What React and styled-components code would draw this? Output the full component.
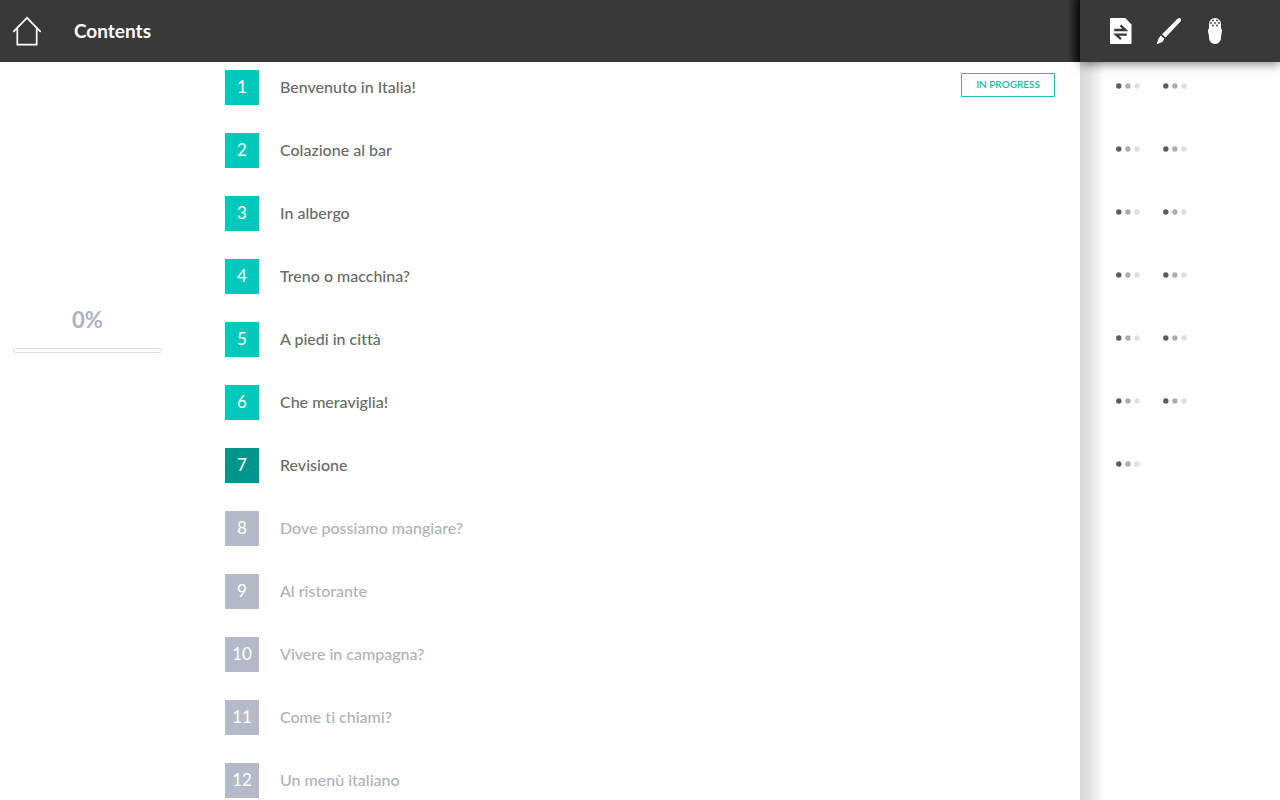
import styled, { createGlobalStyle } from "styled-components";

const GlobalStyle = createGlobalStyle`
  * {
    box-sizing: border-box;
  }

  body {
    margin: 0;
    background-color: #ffffff;
    font-family: Lato, "Open Sans", sans-serif;
    font-variant-ligatures: none;
  }

  button {
    padding: 0;
    border: none;
    background: none;
    font: inherit;
    cursor: pointer;
  }
`;

// --- Layout ---
const Page = styled.div`
  display: grid;
  grid-template-columns: 1fr 200px;
  grid-template-rows: 62px 1fr;
  height: 100vh;
  overflow: hidden;
`;

const Header = styled.header`
  display: flex;
  align-items: center;
  gap: 32px;
  padding: 0 12px;
  background-color: #393939;
  background-image: linear-gradient(to left, rgba(0, 0, 0, 0.7), transparent 12px);
`;

const Tools = styled.nav`
  position: relative;
  z-index: 1;
  display: flex;
  align-items: center;
  gap: 24px;
  padding-left: 28px;
  background-color: #393939;
  box-shadow: 0 2px 10px rgba(0, 0, 0, 0.5);
`;

const Main = styled.main`
  display: grid;
  grid-template-columns: 175px 1fr;
  overflow: hidden;
`;

const Aside = styled.aside`
  background-image: linear-gradient(to right, #d8d8d8, #e2e2e2 10px, #ffffff 24px);
`;

// --- Header ---
const Title = styled.h1`
  margin: 0;
  font-size: 19px;
  font-weight: 700;
  line-height: 24px;
  color: #ffffff;
`;

const IconButton = styled.button`
  display: flex;
  color: #ffffff;
`;

// --- Progress ---
const Progress = styled.section`
  display: flex;
  flex-direction: column;
  align-items: center;
  gap: 14px;
  padding: 244px 13px 0;
`;

const Percent = styled.label`
  font-size: 22px;
  font-weight: 700;
  line-height: 28px;
  color: #adb2bf;
`;

const Bar = styled.progress`
  appearance: none;
  display: block;
  width: 100%;
  height: 5px;
  border: 1px solid #dcdcdc;
  border-radius: 3px;
  background-color: #ffffff;
  overflow: hidden;

  &::-webkit-progress-bar {
    background-color: #ffffff;
  }

  &::-webkit-progress-value {
    background-color: #00c9bb;
  }
`;

// --- Chapters ---
const Chapters = styled.ol`
  margin: 0;
  padding: 8px 25px 0 50px;
  list-style: none;
`;

const Chapter = styled.li`
  display: flex;
  align-items: flex-start;
  justify-content: space-between;
  height: 63px;
`;

const ChapterLink = styled.a`
  display: flex;
  align-items: flex-start;
  gap: 21px;
  font-size: 16px;
  font-weight: 500;
  line-height: 34px;
  color: ${({ $status }) => ($status === "locked" ? "#adb2bc" : "#6a6a6a")};
  text-decoration: none;
`;

const squareColors = {
  open: "#00c9bb",
  review: "#00958b",
  locked: "#b5bac8",
};

const Square = styled.span`
  width: 34px;
  height: 35px;
  background-color: ${({ $status }) => squareColors[$status]};
  font-size: 17px;
  font-weight: 400;
  line-height: 34px;
  text-align: center;
  color: #ffffff;
`;

const Badge = styled.span`
  margin-top: 3px;
  padding: 0 14px;
  border: 1px solid #1fc4b9;
  font-size: 10px;
  font-weight: 600;
  line-height: 21px;
  height: 24px;
  color: #14bdb0;
`;

// --- Downloads ---
const DotRows = styled.ul`
  margin: 0;
  padding: 14px 0 0 36px;
  list-style: none;
`;

const DotRow = styled.li`
  display: flex;
  align-items: flex-start;
  gap: 23px;
  height: 63px;
  padding-top: 7px;
`;

const DotButton = styled.button`
  display: flex;
`;

const chapters = [
  { title: "Benvenuto in Italia!", status: "open", tools: 2, current: true },
  { title: "Colazione al bar", status: "open", tools: 2 },
  { title: "In albergo", status: "open", tools: 2 },
  { title: "Treno o macchina?", status: "open", tools: 2 },
  { title: "A piedi in città", status: "open", tools: 2 },
  { title: "Che meraviglia!", status: "open", tools: 2 },
  { title: "Revisione", status: "review", tools: 1 },
  { title: "Dove possiamo mangiare?", status: "locked", tools: 0 },
  { title: "Al ristorante", status: "locked", tools: 0 },
  { title: "Vivere in campagna?", status: "locked", tools: 0 },
  { title: "Come ti chiami?", status: "locked", tools: 0 },
  { title: "Un menù italiano", status: "locked", tools: 0 },
];

const toolNames = ["Exercises", "Writing"];

function HomeIcon() {
  return (
    <svg width="30" height="30" viewBox="0 0 30 30" fill="none" stroke="currentColor" strokeWidth="1.7">
      <path d="M1.3 15.8 15 1.8l13.7 14" />
      <path d="M5.3 12v16.6h19.4V12" />
    </svg>
  );
}

function PageIcon() {
  return (
    <svg width="24" height="28" viewBox="0 0 24 28">
      <path fill="currentColor" d="M3 1h14.2L23.5 7.6V26q0 1-1 1H3q-1 0-1-1V2Q2 1 3 1z" />
      <g fill="none" stroke="#393939" strokeWidth="2.3">
        <path d="M6.300 13H17.500L12.500 8.400" />
        <path d="M18.800 17.600H8l5 4.600" />
      </g>
    </svg>
  );
}

function BrushIcon() {
  return (
    <svg width="26" height="28" viewBox="0 0 26 28" fill="currentColor">
      <path d="M21.800 1.600q1.400-1.300 2.700-.1t.2 2.700L9.600 20.600 6.100 17.300z" />
      <path d="M4.900 18.600 8.300 21.800 6.300 25 .6 27.300 2.600 21.600z" />
    </svg>
  );
}

function MicIcon() {
  return (
    <svg width="18" height="28" viewBox="-1 0 18 28">
      <path fill="currentColor" d="M2 7a6 6 0 0 1 12 0v4.200q1 .8 1 2t-1 6.300V21a6 6 0 0 1-12 0v-1.500Q1 14.400 1 13.200t1-2z" />
      <g fill="#393939">
        <circle cx="6" cy="3.500" r=".9" />
        <circle cx="10" cy="3.500" r=".9" />
        <circle cx="4" cy="6" r=".9" />
        <circle cx="8" cy="6" r=".9" />
        <circle cx="12" cy="6" r=".9" />
        <circle cx="6" cy="8.500" r=".9" />
        <circle cx="10" cy="8.500" r=".9" />
      </g>
    </svg>
  );
}

function Dots() {
  return (
    <svg width="24" height="6" viewBox="0 0 24 6">
      <circle cx="2.800" cy="3" r="2.700" fill="#5c5c5c" />
      <circle cx="11.900" cy="3" r="2.700" fill="#adadad" />
      <circle cx="21" cy="3" r="2.700" fill="#dedede" />
    </svg>
  );
}

export default function App() {
  return (
    <>
      <GlobalStyle />
      <Page>
        <Header>
          <IconButton type="button" aria-label="Home">
            <HomeIcon />
          </IconButton>
          <Title>Contents</Title>
        </Header>
        <Tools>
          <IconButton type="button" aria-label="Exercises">
            <PageIcon />
          </IconButton>
          <IconButton type="button" aria-label="Writing">
            <BrushIcon />
          </IconButton>
          <IconButton type="button" aria-label="Speaking">
            <MicIcon />
          </IconButton>
        </Tools>
        <Main>
          <Progress>
            <Percent htmlFor="progress">0%</Percent>
            <Bar id="progress" value={0} max={100} />
          </Progress>
          <Chapters>
            {chapters.map(({ title, status, current }, index) => (
              <Chapter key={title}>
                <ChapterLink href={`#chapter-${index + 1}`} $status={status}>
                  <Square $status={status}>{index + 1}</Square>
                  {title}
                </ChapterLink>
                {current && <Badge>IN PROGRESS</Badge>}
              </Chapter>
            ))}
          </Chapters>
        </Main>
        <Aside>
          <DotRows>
            {chapters
              .filter(({ tools }) => tools > 0)
              .map(({ title, tools }) => (
                <DotRow key={title}>
                  {toolNames.slice(0, tools).map((name) => (
                    <DotButton key={name} type="button" aria-label={`${name}: ${title}`}>
                      <Dots />
                    </DotButton>
                  ))}
                </DotRow>
              ))}
          </DotRows>
        </Aside>
      </Page>
    </>
  );
}
